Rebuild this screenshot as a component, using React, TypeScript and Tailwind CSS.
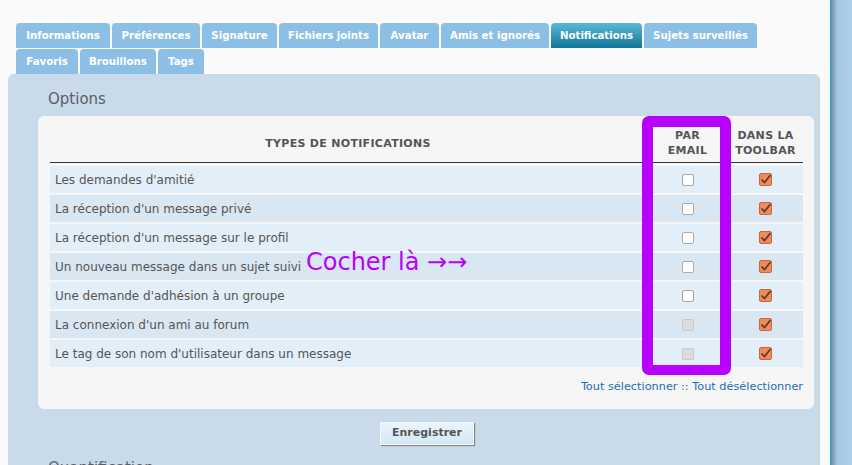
import React from "react";

const font = { fontFamily: '"DejaVu Sans", Verdana, sans-serif' };

type Tab = { label: string; w: string; active?: boolean };

const row1: Tab[] = [
  { label: "Informations", w: "w-[94px]" },
  { label: "Préférences", w: "w-[88px]" },
  { label: "Signature", w: "w-[75px]" },
  { label: "Fichiers joints", w: "w-[99px]" },
  { label: "Avatar", w: "w-[59px]" },
  { label: "Amis et ignorés", w: "w-[108px]" },
  { label: "Notifications", w: "w-[91px]", active: true },
  { label: "Sujets surveillés", w: "w-[113px]" },
];
const row2: Tab[] = [
  { label: "Favoris", w: "w-[62px]" },
  { label: "Brouillons", w: "w-[76px]" },
  { label: "Tags", w: "w-[46px]" },
];

const rows: { label: string; disabled?: boolean }[] = [
  { label: "Les demandes d'amitié" },
  { label: "La réception d'un message privé" },
  { label: "La réception d'un message sur le profil" },
  { label: "Un nouveau message dans un sujet suivi" },
  { label: "Une demande d'adhésion à un groupe" },
  { label: "La connexion d'un ami au forum", disabled: true },
  { label: "Le tag de son nom d'utilisateur dans un message", disabled: true },
];

function TabItem({ t }: { t: Tab }) {
  return (
    <div
      className={`${t.w} h-[25px] rounded-t-[4px] flex items-center justify-center text-[10.2px] font-bold text-white ${
        t.active ? "bg-gradient-to-b from-[#58bad8] to-[#0b7597]" : "bg-[#8cbfe6]"
      }`}
    >
      {t.label}
    </div>
  );
}

function EmailBox({ disabled }: { disabled?: boolean }) {
  return (
    <div
      className={`w-[12px] h-[12px] rounded-[2px] border ${
        disabled ? "bg-[#dcdcdc] border-[#c9c9c9]" : "bg-white border-[#a8a8a8]"
      }`}
    />
  );
}

function ToolbarBox() {
  return (
    <div className="w-[13px] h-[13px] rounded-[2px] border border-[#c9663a] bg-[#ee8a5c] flex items-center justify-center">
      <svg width="11" height="11" viewBox="0 0 11 11">
        <path d="M1.5 5.5 L4.5 8.5 L10.5 1" fill="none" stroke="#5a3a2c" strokeWidth="1.7" />
      </svg>
    </div>
  );
}

export default function App() {
  return (
    <div className="flex w-[852px] h-[465px] overflow-hidden bg-[#fafafa]" style={font}>
      <div className="w-[830px] pl-[8px] pr-[10px] pt-[23px] flex flex-col">
        <div className="pl-[8px] flex flex-col gap-[1px]">
          <div className="flex gap-[2px]">
            {row1.map((t) => (
              <TabItem key={t.label} t={t} />
            ))}
          </div>
          <div className="flex gap-[2px]">
            {row2.map((t) => (
              <TabItem key={t.label} t={t} />
            ))}
          </div>
        </div>
        <div className="flex-1 bg-[#c9dbea] rounded-t-[6px] pt-[14px] pl-[30px] pr-[6px] flex flex-col">
          <div className="h-[22px] leading-[22px] text-[15px] text-[#5d5d68] pl-[10px]">Options</div>
          <div className="mt-[6px] relative bg-[#f6f6f6] rounded-[6px] pt-[8px] pl-[12px] pr-[11px] pb-[15px]">
            <div className="grid grid-cols-[596px_83px_73px] py-[4px] items-center text-[11px] font-bold text-[#555] leading-[15px] tracking-[0.3px]">
              <div className="text-center">TYPES DE NOTIFICATIONS</div>
              <div className="text-center">
                PAR
                <br />
                EMAIL
              </div>
              <div className="text-center">
                DANS LA
                <br />
                TOOLBAR
              </div>
            </div>
            <div className="h-[1px] bg-[#333]" />
            <div className="mt-[3px] flex flex-col gap-[2px]">
              {rows.map((r, i) => (
                <div
                  key={r.label}
                  className={`grid grid-cols-[596px_83px_73px] h-[27px] items-center ${
                    i % 2 === 0 ? "bg-[#e2eef8]" : "bg-[#d9e7f3]"
                  }`}
                >
                  <div className="pl-[5px] text-[12px] text-[#555]">{r.label}</div>
                  <div className="flex justify-center pl-[1px]">
                    <EmailBox disabled={r.disabled} />
                  </div>
                  <div className="flex justify-center">
                    <ToolbarBox />
                  </div>
                </div>
              ))}
            </div>
            <div className="mt-[13px] text-right text-[11.3px] text-[#1f6db3] leading-[14px]">
              Tout sélectionner :: Tout désélectionner
            </div>
            <div className="absolute left-[604px] top-0 w-[89px] h-[259px] border-[11px] border-b-[10px] border-[#b800ff] rounded-[7px]" />
            <div className="absolute left-[268px] top-[134px] text-[24px] leading-none text-[#b800ff] whitespace-nowrap">
              Cocher là →→
            </div>
          </div>
          <div className="mt-[13px] flex justify-center pl-[2px]">
            <div className="w-[94px] h-[23px] flex items-center justify-center text-[11px] font-bold text-[#555] bg-gradient-to-b from-[#eaf5fc] to-[#d3e8f6] border border-[#f2f8fc] shadow-[1px_1px_1px_#888]">
              Enregistrer
            </div>
          </div>
          <div className="mt-[12px] h-[22px] leading-[22px] text-[15px] text-[#5d5d68] pl-[10px]">Quantification</div>
        </div>
      </div>
      <div className="w-[1px] bg-[#1aa3c6]" />
      <div className="flex-1 bg-gradient-to-r from-[#6f8aa3] via-[#a6c9e4] via-30% to-[#accfea]" />
    </div>
  );
}
